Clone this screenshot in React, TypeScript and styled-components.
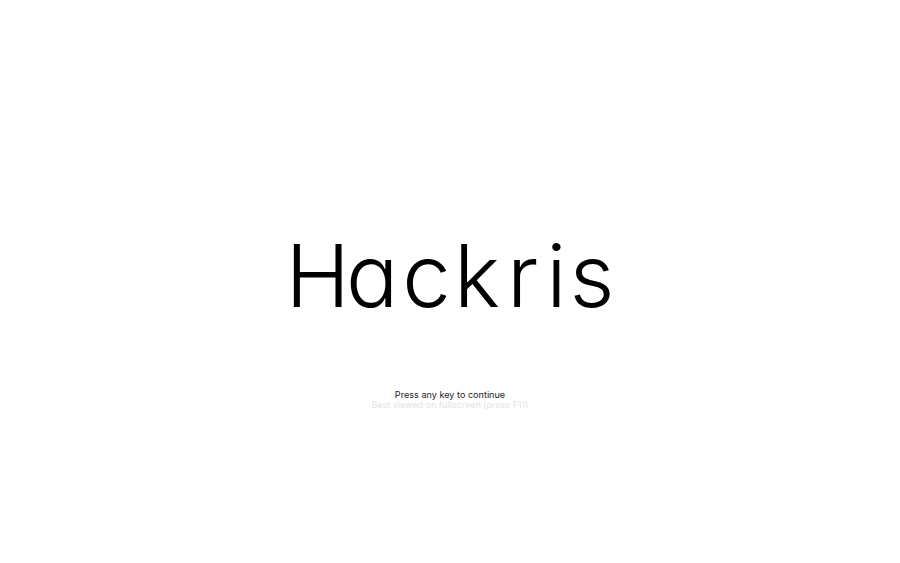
import React from "react";
import styled, { createGlobalStyle } from "styled-components";

const Global = createGlobalStyle`
  html, body { margin: 0; height: 100%; background: #fff; }
  #root { height: 100%; }
`;

const Screen = styled.main`
  height: 563px;
  box-sizing: border-box;
  padding-top: 226px;
  display: flex;
  flex-direction: column;
  align-items: center;
  overflow: hidden;
  font-family: Inter, "Liberation Sans", sans-serif;
`;

const Title = styled.h1`
  margin: 0 0 64px;
  font-size: 87px;
  line-height: 100px;
  font-weight: 300;
  color: #000;
  font-feature-settings: "cv11" 1;
`;

const Letter = styled.span<{ $spacing: number }>`
  letter-spacing: ${(p) => p.$spacing}px;
`;

const Hint = styled.p<{ $muted?: boolean }>`
  margin: 0;
  font-size: ${(p) => (p.$muted ? "9px" : "9.1px")};
  line-height: 10px;
  white-space: nowrap;
  color: ${(p) => (p.$muted ? "#e4e4e4" : "#222")};
`;

const letters: [string, number][] = [
  ["H", -4],
  ["a", 4],
  ["c", 3],
  ["k", 7],
  ["r", 8],
  ["i", 3],
  ["s", 0],
];

export default function App() {
  return (
    <>
      <Global />
      <Screen>
        <Title>
          {letters.map(([ch, spacing], i) => (
            <Letter key={i} $spacing={spacing}>
              {ch}
            </Letter>
          ))}
        </Title>
        <Hint>Press any key to continue</Hint>
        <Hint $muted>Best viewed on fullscreen (press F11)</Hint>
      </Screen>
    </>
  );
}
